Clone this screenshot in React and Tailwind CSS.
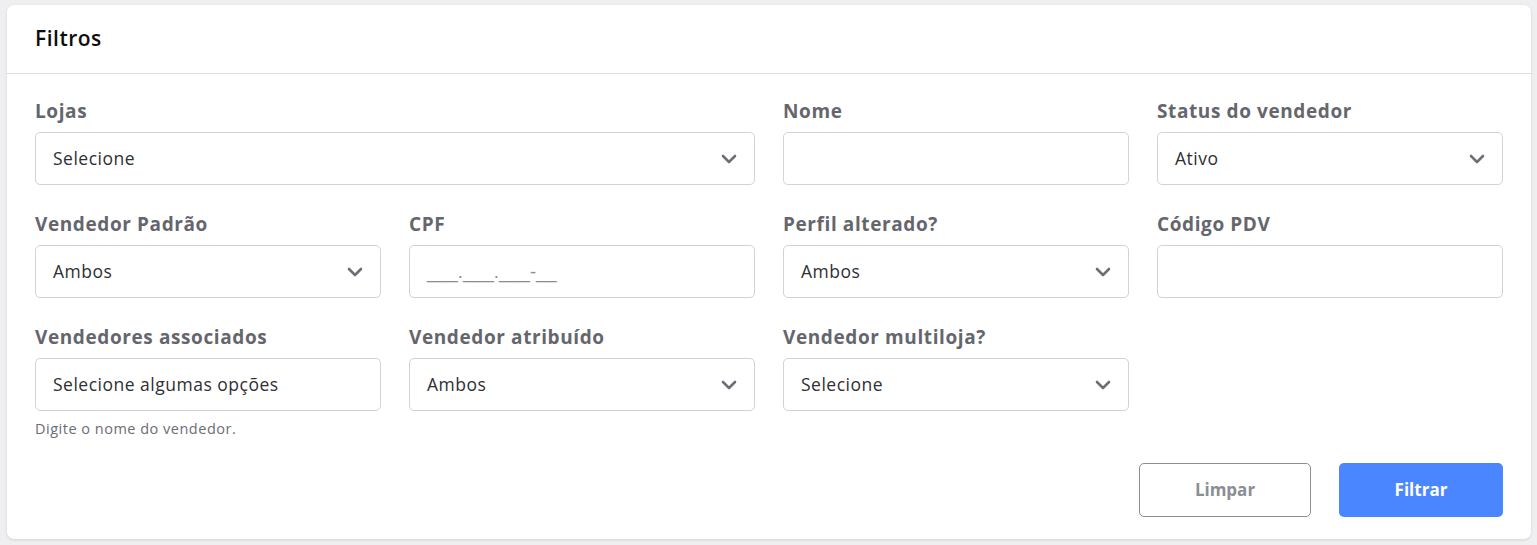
import React from "react";

const font = { fontFamily: "'Open Sans', 'Noto Sans', sans-serif" };

function Chevron() {
  return (
    <svg width="16" height="10" viewBox="0 0 16 10" className="shrink-0">
      <polyline points="2,2 8,8 14,2" fill="none" stroke="#6b6f78" strokeWidth="2.6" strokeLinecap="round" strokeLinejoin="round" />
    </svg>
  );
}

function Label({ children }) {
  return <div className="text-[19px] leading-[22px] font-bold tracking-[0.6px] text-[#65666d] mb-[10px]">{children}</div>;
}

function Select({ label, value, className = "" }) {
  return (
    <div className={className}>
      <Label>{label}</Label>
      <div className="h-[53px] rounded-[5px] border border-[#d2d3d7] bg-white flex items-center justify-between pl-[17px] pr-[17px]">
        <span className="text-[17.5px] tracking-[0.5px] text-[#2e2f33]">{value}</span>
        <Chevron />
      </div>
    </div>
  );
}

function Input({ label, placeholder, className = "" }) {
  return (
    <div className={className}>
      <Label>{label}</Label>
      <div className="h-[53px] rounded-[5px] border border-[#d2d3d7] bg-white flex items-center pl-[17px]">
        {placeholder && (
          <span className="text-[18.5px] text-[#8a8d93]" style={{ fontFamily: "'Liberation Sans', Arial, sans-serif" }}>
            {placeholder}
          </span>
        )}
      </div>
    </div>
  );
}

export default function App() {
  return (
    <div className="min-h-[545px] bg-[#efeff1] pt-[5px] pl-[7px] pr-[6px]" style={font}>
      <div className="bg-white rounded-[7px] shadow-[0_1px_3px_rgba(0,0,0,0.12)]">
        <div className="h-[69px] flex items-center px-7 border-b border-[#dcdde0]">
          <h1 className="text-[21px] font-semibold tracking-[0.5px] text-[#0d0d0f]">Filtros</h1>
        </div>
        <div className="px-7 pt-[26px] pb-[22px]">
          <div className="grid grid-cols-4 gap-x-7 gap-y-7">
            <Select label="Lojas" value="Selecione" className="col-span-2" />
            <Input label="Nome" />
            <Select label="Status do vendedor" value="Ativo" />
            <Select label="Vendedor Padrão" value="Ambos" />
            <Input label="CPF" placeholder="___.___.___-__" />
            <Select label="Perfil alterado?" value="Ambos" />
            <Input label="Código PDV" />
            <div>
              <Label>Vendedores associados</Label>
              <div className="h-[53px] rounded-[5px] border border-[#d2d3d7] bg-white flex items-center pl-[17px]">
                <span className="text-[17.5px] tracking-[0.5px] text-[#2e2f33]">Selecione algumas opções</span>
              </div>
              <div className="mt-[8px] text-[14.5px] leading-[20px] tracking-[0.5px] text-[#6b6d74]">
                Digite o nome do vendedor.
              </div>
            </div>
            <Select label="Vendedor atribuído" value="Ambos" />
            <Select label="Vendedor multiloja?" value="Selecione" />
          </div>
          <div className="flex justify-end gap-7 mt-[24px]">
            <button className="w-[172px] h-[54px] rounded-[5px] border border-[#8b8e95] bg-white text-[17px] font-bold text-[#8b8e95]">
              Limpar
            </button>
            <button className="w-[164px] h-[54px] rounded-[5px] bg-[#4a86ff] text-[17px] font-bold text-white">
              Filtrar
            </button>
          </div>
        </div>
      </div>
    </div>
  );
}
